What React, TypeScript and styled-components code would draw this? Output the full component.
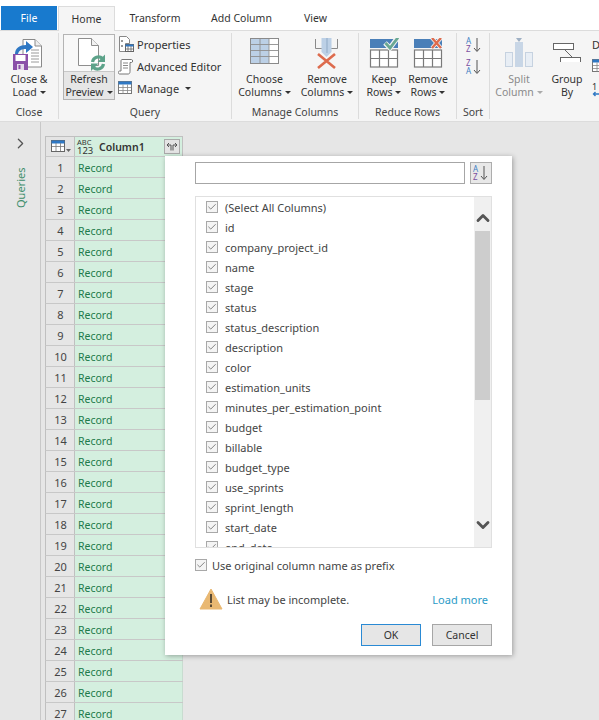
import React from "react";
import styled, { createGlobalStyle } from "styled-components";
import { ChevronRight, ChevronUp, ChevronDown, Check } from "lucide-react";

const FONT = `"Noto Sans", "Open Sans", "Liberation Sans", sans-serif`;

const Global = createGlobalStyle`
  html, body { margin: 0; padding: 0; background: #e6e6e6; }
  body { font-family: ${FONT}; color: #333; }
  * { box-sizing: border-box; }
`;

const Page = styled.div`
  width: 599px;
  height: 720px;
  overflow: hidden;
  position: relative;
  display: flex;
  flex-direction: column;
`;

/* ---- tabs ---- */
const Tabs = styled.div`
  height: 30px;
  padding-top: 6px;
  background: #fff;
  display: flex;
  padding-left: 1px;
  flex: none;
`;
const Tab = styled.div<{ $w: number; $active?: boolean; $file?: boolean }>`
  width: ${(p) => p.$w}px;
  height: ${(p) => (p.$active ? 25 : 24)}px;
  display: flex;
  align-items: center;
  justify-content: center;
  font-size: 10.5px;
  color: ${(p) => (p.$file ? "#fff" : "#333")};
  background: ${(p) => (p.$file ? "#187ace" : p.$active ? "#f5f5f5" : "#fff")};
  border: ${(p) => (p.$active ? "1px solid #dcdcdc" : "none")};
  border-bottom: none;
  position: relative;
  z-index: 1;
`;

/* ---- ribbon ---- */
const Ribbon = styled.div`
  height: 92px;
  flex: none;
  display: flex;
  background: #f5f5f5;
  border-top: 1px solid #dcdcdc;
  border-bottom: 1px solid #dcdcdc;
  overflow: hidden;
  padding-top: 2px;
`;
const Group = styled.div<{ $w: number; $last?: boolean }>`
  width: ${(p) => p.$w}px;
  flex: none;
  height: 86px;
  display: flex;
  flex-direction: column;
  border-right: ${(p) => (p.$last ? "none" : "1px solid #dcdcdc")};
`;
const GroupBody = styled.div<{ $pad?: number }>`
  flex: 1;
  display: flex;
  padding-left: ${(p) => p.$pad ?? 0}px;
  min-height: 0;
`;
const GroupLabel = styled.div`
  height: 14px;
  line-height: 14px;
  text-align: center;
  font-size: 10.5px;
  color: #444;
  white-space: nowrap;
`;
const BigBtn = styled.div<{ $w: number; $dim?: boolean }>`
  width: ${(p) => p.$w}px;
  flex: none;
  display: flex;
  flex-direction: column;
  align-items: center;
  color: ${(p) => (p.$dim ? "#8a8a8a" : "#333")};
  font-size: 10.5px;
  line-height: 13px;
  text-align: center;
  white-space: nowrap;
`;
const BigIcon = styled.div`
  height: 40px;
  padding-top: 5px;
  display: flex;
  justify-content: center;
  flex: none;
`;
const Caret = styled.span<{ $dim?: boolean }>`
  display: inline-block;
  width: 0;
  height: 0;
  margin-left: 3px;
  vertical-align: 2px;
  border-left: 3px solid transparent;
  border-right: 3px solid transparent;
  border-top: 3px solid ${(p) => (p.$dim ? "#aaa" : "#333")};
`;
const RefreshBtn = styled.div`
  width: 52px;
  height: 66px;
  margin: 1px 3px 0 4px;
  flex: none;
  border: 1px solid #b4b4b4;
  display: flex;
  flex-direction: column;
  align-items: center;
  font-size: 10.5px;
  line-height: 13px;
  text-align: center;
  white-space: nowrap;
`;
const RefreshTop = styled.div`
  height: 36px;
  width: 100%;
  background: #f8f8f8;
  display: flex;
  justify-content: center;
  padding-top: 3px;
  flex: none;
`;
const RefreshBottom = styled.div`
  flex: 1;
  width: 100%;
  background: #e6e6e6;
  border-top: 1px solid #c8c8c8;
  padding-top: 1px;
`;
const SmallCol = styled.div<{ $ml?: number; $pt?: number }>`
  display: flex;
  flex-direction: column;
  padding-top: ${(p) => p.$pt ?? 0}px;
  margin-left: ${(p) => p.$ml ?? 0}px;
`;
const SmallBtn = styled.div`
  height: 22px;
  display: flex;
  align-items: center;
  gap: 3px;
  font-size: 11px;
  white-space: nowrap;
`;
const TinyStack = styled.div`
  display: flex;
  flex-direction: column;
  font-size: 9px;
  line-height: 9px;
  padding-top: 3px;
`;

/* ---- body ---- */
const Main = styled.div`
  flex: 1;
  display: flex;
  min-height: 0;
  background: #e6e6e6;
`;
const QueriesPane = styled.div`
  width: 41px;
  flex: none;
  border-right: 1px solid #c8c8c8;
  display: flex;
  flex-direction: column;
  align-items: center;
  padding-top: 13px;
  padding-left: 1px;
`;
const QueriesLabel = styled.div`
  writing-mode: vertical-rl;
  transform: rotate(180deg);
  font-size: 11px;
  color: #3e8e6c;
  margin-top: 13px;
  height: 43px;
  line-height: 14px;
  text-align: left;
`;
const Table = styled.div`
  margin: 14px 0 0 4px;
  width: 138px;
  flex: none;
`;
const HeadRow = styled.div`
  height: 21px;
  display: flex;
  border: 1px solid #c0c0c0;
  border-bottom: 1px solid #c8c8c8;
`;
const HeadIndex = styled.div`
  width: 29px;
  flex: none;
  background: #e4e4e4;
  border-right: 1px solid #c0c0c0;
  display: flex;
  align-items: center;
  padding-left: 5px;
`;
const HeadCol = styled.div`
  flex: 1;
  background: #d4efdf;
  display: flex;
  align-items: center;
  padding-left: 2px;
  position: relative;
`;
const TypeBadge = styled.div`
  font-size: 7.5px;
  line-height: 8px;
  color: #333;
  width: 21px;
  flex: none;
  text-align: left;
  & > b { font-weight: 400; font-size: 9.5px; line-height: 9px; display: block; }
`;
const ColName = styled.div`
  font-size: 10.5px;
  font-weight: 600;
  margin-left: 1px;
  color: #333;
`;
const ExpandBtn = styled.div`
  position: absolute;
  right: 2px;
  top: 2px;
  width: 16px;
  height: 15px;
  background: #e4e4e4;
  border: 1px solid #aaa;
  display: flex;
  align-items: center;
  justify-content: center;
`;
const Row = styled.div`
  height: 21px;
  display: flex;
  border-left: 1px solid #c0c0c0;
  border-bottom: 1px solid #c8c8c8;
`;
const RowNum = styled.div`
  width: 29px;
  flex: none;
  background: #e6e6e6;
  border-right: 1px solid #c0c0c0;
  text-align: center;
  font-size: 11px;
  line-height: 21px;
  color: #444;
  padding-left: 1px;
`;
const RowCell = styled.div`
  flex: 1;
  background: #d4efdf;
  border-right: 1px solid #c8dcd0;
  font-size: 10.5px;
  line-height: 22px;
  padding-left: 3px;
  color: #217a4b;
`;

/* ---- dialog ---- */
const Dialog = styled.div`
  position: absolute;
  left: 165px;
  top: 156px;
  width: 347px;
  height: 499px;
  background: #fff;
  box-shadow: 1px 1px 5px rgba(0, 0, 0, 0.32);
  padding: 6px 20px 0 30px;
  display: flex;
  flex-direction: column;
`;
const SearchRow = styled.div`
  display: flex;
  gap: 5px;
  height: 22px;
  flex: none;
`;
const SearchInput = styled.div`
  flex: 1;
  background: #fff;
  border: 1px solid #a6a6a6;
`;
const SortBtn = styled.div`
  width: 22px;
  background: #e8e8e8;
  border: 1px solid #adadad;
  display: flex;
  align-items: center;
  justify-content: center;
`;
const ListBox = styled.div`
  margin-top: 12px;
  height: 352px;
  flex: none;
  border: 1px solid #e0e0e0;
  display: flex;
  overflow: hidden;
`;
const ListItems = styled.div`
  flex: 1;
  padding: 0 0 0 10px;
  overflow: hidden;
`;
const ListItem = styled.div`
  height: 20px;
  display: flex;
  align-items: center;
  gap: 7px;
  font-size: 11px;
  color: #444;
  white-space: nowrap;
`;
const Box = styled.span`
  width: 12px;
  height: 12px;
  flex: none;
  background: #f4f4f4;
  border: 1px solid #a8a8a8;
  display: inline-flex;
  align-items: center;
  justify-content: center;
  color: #6e6e6e;
`;
const ScrollTrack = styled.div`
  width: 17px;
  flex: none;
  background: #f0f0f0;
  display: flex;
  flex-direction: column;
  align-items: center;
  color: #555;
`;
const ScrollArrow = styled.div<{ $h: number; $top: number }>`
  height: ${(p) => p.$h}px;
  padding-top: ${(p) => p.$top}px;
  flex: none;
`;
const ScrollThumb = styled.div`
  width: 15px;
  height: 169px;
  background: #cdcdcd;
  flex: none;
`;
const ScrollGap = styled.div`
  flex: 1;
`;
const PrefixRow = styled.div`
  margin-top: 10px;
  display: flex;
  align-items: center;
  gap: 5px;
  height: 14px;
  font-size: 11px;
  color: #444;
`;
const WarnRow = styled.div`
  margin-top: 15px;
  height: 24px;
  display: flex;
  align-items: center;
  padding: 0 4px 0 4px;
  font-size: 11px;
  color: #444;
`;
const WarnText = styled.div`
  margin-left: 4px;
  flex: 1;
`;
const LoadMore = styled.div`
  color: #2b9bc7;
  font-size: 11px;
`;
const Actions = styled.div`
  margin-top: 13px;
  display: flex;
  justify-content: flex-end;
  gap: 11px;
`;
const DlgButton = styled.div<{ $primary?: boolean }>`
  width: 60px;
  height: 22px;
  background: #e6e6e6;
  border: 1px solid ${(p) => (p.$primary ? "#2a8ad4" : "#a6a6a6")};
  font-size: 10.5px;
  line-height: 20px;
  text-align: center;
  color: #333;
`;

/* ---- icons ---- */
const CloseLoadIcon = () => (
  <svg width="32" height="33" viewBox="0 0 32 33">
    <path d="M10 1.500h12l6.500 6.500v21H10z" fill="#fff" stroke="#8a8a8a" />
    <path d="M22 1.500V8h6.500" fill="#eee" stroke="#8a8a8a" />
    <path d="M18 12h8M18 15h8M18 18h8M18 21h8M18 24h8" stroke="#9a9a9a" />
    <path d="M2 16c0-6 5-9 11-9V3l7 6-7 6v-4c-4 0-7 1-8 5z" fill="#2f78c4" />
    <rect x="0" y="16" width="15" height="16" fill="#8a4fa8" />
    <rect x="2.500" y="17" width="10" height="6" fill="#fff" />
    <rect x="4" y="26" width="7" height="6" fill="#e4d8ea" />
    <rect x="5.500" y="27" width="2" height="4" fill="#8a4fa8" />
  </svg>
);
const RefreshIcon = () => (
  <svg width="34" height="33" viewBox="0 0 34 33">
    <path d="M6.500.5h13l7 7v20h-20z" fill="#fff" stroke="#8e8e8e" />
    <path d="M19.500.5v7h7" fill="#f2f2f2" stroke="#8e8e8e" />
    <path d="M20.500 24a6 6 0 0 1 10-3.500" fill="none" stroke="#5da38a" strokeWidth="3.200" />
    <path d="M33 16.500v7.500h-7.500z" fill="#5da38a" />
    <path d="M31.500 26a6 6 0 0 1-10 3.500" fill="none" stroke="#5da38a" strokeWidth="3.200" />
    <path d="M19 33v-7.500h7.500z" fill="#5da38a" />
  </svg>
);
const PropsIcon = () => (
  <svg width="16" height="16" viewBox="0 0 16 16">
    <path d="M1.500.5h7l3 3v4h-4v8h-6z" fill="#fff" stroke="#888" />
    <circle cx="4" cy="5" r="1" fill="#777" />
    <circle cx="4" cy="10" r="1" fill="#777" />
    <rect x="7.500" y="8.500" width="8" height="7" fill="#fff" stroke="#666" />
    <rect x="7.500" y="8.500" width="8" height="2" fill="#2f78c4" />
    <path d="M10 10v5M13 10v5M8 13h7" stroke="#666" strokeWidth=".8" />
  </svg>
);
const EditorIcon = () => (
  <svg width="16" height="17" viewBox="0 0 16 17">
    <path d="M4 1.500h9.500c1.500 0 1.500 3 0 3H12v9c0 2-1 2.500-2 2.500H1.500c-1.500 0-1.500-3 0-3H3V3c0-1 .5-1.500 1-1.500z" fill="#fff" stroke="#777" />
    <path d="M5 5h5M5 7.500h5M5 10h5" stroke="#888" />
  </svg>
);
const GridSmall = () => (
  <svg width="16" height="14" viewBox="0 0 16 14">
    <rect x=".5" y=".5" width="13" height="12" fill="#fff" stroke="#777" />
    <rect x=".5" y=".5" width="13" height="3" fill="#2f78c4" />
    <path d="M5 3.500v9M9.500 3.500v9M1 6.500h12M1 9.500h12" stroke="#888" strokeWidth=".8" />
  </svg>
);
const ChooseIcon = () => (
  <svg width="30" height="28" viewBox="0 0 30 28">
    <rect x=".5" y=".5" width="28" height="25" fill="#fff" stroke="#8a8a8a" />
    <rect x="1" y="1" width="18" height="24" fill="#bcd0e6" />
    <path d="M10 1v24M19 1v24M1 6.500h27M1 12.500h27M1 18.500h27" stroke="#8f8f8f" strokeWidth=".9" />
  </svg>
);
const RemoveColsIcon = () => (
  <svg width="30" height="32" viewBox="0 0 30 32">
    <path d="M3.500 1v9.500h22V1" fill="none" stroke="#8a8a8a" />
    <path d="M9.500 0h10v14l-5 5-5-5z" fill="#bcd0e6" />
    <path d="M14 0h2v15h-2z" fill="#a6bdd6" />
    <path d="M6 16l17 14M23 16L6 30" stroke="#dd6b4d" strokeWidth="2.600" />
  </svg>
);
const RowsIcon = ({ mark }: { mark: "keep" | "remove" }) => (
  <svg width="30" height="30" viewBox="0 0 30 30">
    <rect x="1" y="1" width="28" height="9" fill="#4a7fb8" />
    <rect x="1.500" y="12" width="27" height="17" fill="#fff" stroke="#7a7a7a" strokeWidth="1.200" />
    <path d="M10.500 12v17M19.500 12v17M1 20.500h27" stroke="#7a7a7a" strokeWidth="1.200" />
    {mark === "keep" ? (
      <>
        <path d="M16 5l5 5L29-1" fill="none" stroke="#f5f5f5" strokeWidth="5" />
        <path d="M16.500 5l4.500 5L29-.5" fill="none" stroke="#6aa893" strokeWidth="2.800" />
      </>
    ) : (
      <>
        <path d="M19 0l9 10M28 0l-9 10" stroke="#f5f5f5" strokeWidth="4" />
        <path d="M19 0l9 10M28 0l-9 10" stroke="#dd6b4d" strokeWidth="2.400" />
      </>
    )}
  </svg>
);
const SortIcon = ({ desc }: { desc?: boolean }) => (
  <svg width="16" height="16" viewBox="0 0 16 16" overflow="visible">
    <text x="0" y="7" fontSize="8" fontFamily="Noto Sans" fill={desc ? "#7a4fa0" : "#3d7fc4"}>
      {desc ? "Z" : "A"}
    </text>
    <text x="0" y="15" fontSize="8" fontFamily="Noto Sans" fill={desc ? "#3d7fc4" : "#7a4fa0"}>
      {desc ? "A" : "Z"}
    </text>
    <path d="M11 1v13M8 11l3 3.500 3-3.500" fill="none" stroke="#555" />
  </svg>
);
const SplitIcon = () => (
  <svg width="30" height="30" viewBox="0 0 30 30">
    <rect x="1.500" y="14.500" width="7" height="14" fill="#e8eef5" stroke="#c6d2e0" />
    <rect x="11" y="4" width="8" height="25" fill="#c8d6e6" />
    <path d="M12 0h6l-3 4z" fill="#9fb0c4" />
    <rect x="21.500" y="14.500" width="7" height="14" fill="#e8eef5" stroke="#c6d2e0" />
  </svg>
);
const GroupByIcon = () => (
  <svg width="30" height="24" viewBox="0 0 30 24">
    <rect x="1.500" y="5.500" width="20" height="6" fill="#fff" stroke="#666" />
    <rect x="8.500" y="19.500" width="20" height="6" fill="#fff" stroke="#666" />
    <path d="M13 12l7 7" stroke="#666" />
  </svg>
);
const ReturnArrow = () => (
  <svg width="10" height="6" viewBox="0 0 10 6">
    <path d="M8 0v3H1.500M3.500 1L1.500 3l2 2" fill="none" stroke="#2f78c4" strokeWidth="1.400" />
  </svg>
);
const TableMenuIcon = () => (
  <svg width="21" height="13" viewBox="0 0 21 13">
    <rect x=".5" y=".5" width="13" height="11" fill="#fff" stroke="#666" />
    <rect x=".5" y=".5" width="13" height="3" fill="#2f78c4" />
    <path d="M5 3v8M9.500 3v8M1 6.500h12" stroke="#777" strokeWidth=".8" />
    <path d="M15 9h5l-2.500 3z" fill="#666" />
  </svg>
);
const ExpandIcon = () => (
  <svg width="12" height="9" viewBox="0 0 12 9">
    <path d="M5 8.500V3H1M3 1L1 3l2 2" fill="none" stroke="#555" />
    <path d="M7 8.500V3h4M9 1l2 2-2 2" fill="none" stroke="#555" />
  </svg>
);
const WarnIcon = () => (
  <svg width="24" height="22" viewBox="0 0 24 22">
    <path d="M12 1l11 20H1z" fill="#e9b872" stroke="#e9b872" strokeLinejoin="round" />
    <rect x="11" y="6" width="2" height="9" fill="#5a4a35" />
    <rect x="11" y="16.500" width="2" height="2.500" fill="#5a4a35" />
  </svg>
);

const columns = [
  "(Select All Columns)",
  "id",
  "company_project_id",
  "name",
  "stage",
  "status",
  "status_description",
  "description",
  "color",
  "estimation_units",
  "minutes_per_estimation_point",
  "budget",
  "billable",
  "budget_type",
  "use_sprints",
  "sprint_length",
  "start_date",
  "end_date",
];

const Checkbox = () => (
  <Box>
    <Check size={10} strokeWidth={2} />
  </Box>
);

export default function App() {
  return (
    <Page>
      <Global />
      <Tabs>
        <Tab $w={56} $file>File</Tab>
        <Tab $w={1} />
        <Tab $w={57} $active>Home</Tab>
        <Tab $w={80}>Transform</Tab>
        <Tab $w={93}>Add Column</Tab>
        <Tab $w={55}>View</Tab>
      </Tabs>
      <Ribbon>
        <Group $w={59}>
          <GroupBody>
            <BigBtn $w={58}>
              <BigIcon><CloseLoadIcon /></BigIcon>
              <span>Close &amp;</span>
              <span>Load<Caret /></span>
            </BigBtn>
          </GroupBody>
          <GroupLabel>Close</GroupLabel>
        </Group>
        <Group $w={173}>
          <GroupBody>
            <RefreshBtn>
              <RefreshTop><RefreshIcon /></RefreshTop>
              <RefreshBottom>
                Refresh<br />Preview<Caret />
              </RefreshBottom>
            </RefreshBtn>
            <SmallCol>
              <SmallBtn><PropsIcon />Properties</SmallBtn>
              <SmallBtn><EditorIcon />Advanced Editor</SmallBtn>
              <SmallBtn><GridSmall />Manage<Caret /></SmallBtn>
            </SmallCol>
          </GroupBody>
          <GroupLabel>Query</GroupLabel>
        </Group>
        <Group $w={127}>
          <GroupBody>
            <BigBtn $w={65}>
              <BigIcon><ChooseIcon /></BigIcon>
              <span>Choose</span>
              <span>Columns<Caret /></span>
            </BigBtn>
            <BigBtn $w={60}>
              <BigIcon><RemoveColsIcon /></BigIcon>
              <span>Remove</span>
              <span>Columns<Caret /></span>
            </BigBtn>
          </GroupBody>
          <GroupLabel>Manage Columns</GroupLabel>
        </Group>
        <Group $w={98}>
          <GroupBody $pad={3}>
            <BigBtn $w={44}>
              <BigIcon><RowsIcon mark="keep" /></BigIcon>
              <span>Keep</span>
              <span>Rows<Caret /></span>
            </BigBtn>
            <BigBtn $w={44}>
              <BigIcon><RowsIcon mark="remove" /></BigIcon>
              <span>Remove</span>
              <span>Rows<Caret /></span>
            </BigBtn>
          </GroupBody>
          <GroupLabel>Reduce Rows</GroupLabel>
        </Group>
        <Group $w={33}>
          <GroupBody $pad={9}>
            <SmallCol $pt={1}>
              <SmallBtn><SortIcon /></SmallBtn>
              <SmallBtn><SortIcon desc /></SmallBtn>
            </SmallCol>
          </GroupBody>
          <GroupLabel>Sort</GroupLabel>
        </Group>
        <Group $w={109} $last>
          <GroupBody $pad={4}>
            <BigBtn $w={50} $dim>
              <BigIcon><SplitIcon /></BigIcon>
              <span>Split</span>
              <span>Column<Caret $dim /></span>
            </BigBtn>
            <BigBtn $w={46}>
              <BigIcon><GroupByIcon /></BigIcon>
              <span>Group</span>
              <span>By</span>
            </BigBtn>
            <SmallCol $ml={2}>
              <SmallBtn>D</SmallBtn>
              <SmallBtn><GridSmall /></SmallBtn>
              <SmallBtn>
                <TinyStack>1<ReturnArrow /></TinyStack>
              </SmallBtn>
            </SmallCol>
          </GroupBody>
        </Group>
      </Ribbon>
      <Main>
        <QueriesPane>
          <ChevronRight size={17} strokeWidth={1.8} color="#555" />
          <QueriesLabel>Queries</QueriesLabel>
        </QueriesPane>
        <Table>
          <HeadRow>
            <HeadIndex><TableMenuIcon /></HeadIndex>
            <HeadCol>
              <TypeBadge>ABC<b>123</b></TypeBadge>
              <ColName>Column1</ColName>
              <ExpandBtn><ExpandIcon /></ExpandBtn>
            </HeadCol>
          </HeadRow>
          {Array.from({ length: 27 }, (_, i) => (
            <Row key={i}>
              <RowNum>{i + 1}</RowNum>
              <RowCell>Record</RowCell>
            </Row>
          ))}
        </Table>
      </Main>
      <Dialog>
        <SearchRow>
          <SearchInput />
          <SortBtn><SortIcon /></SortBtn>
        </SearchRow>
        <ListBox>
          <ListItems>
            {columns.map((c) => (
              <ListItem key={c}>
                <Checkbox />
                {c}
              </ListItem>
            ))}
          </ListItems>
          <ScrollTrack>
            <ScrollArrow $h={34} $top={11}><ChevronUp size={20} strokeWidth={3.4} /></ScrollArrow>
            <ScrollThumb />
            <ScrollGap />
            <ScrollArrow $h={32} $top={0}><ChevronDown size={20} strokeWidth={3.4} /></ScrollArrow>
          </ScrollTrack>
        </ListBox>
        <PrefixRow>
          <Checkbox />
          Use original column name as prefix
        </PrefixRow>
        <WarnRow>
          <WarnIcon />
          <WarnText>List may be incomplete.</WarnText>
          <LoadMore>Load more</LoadMore>
        </WarnRow>
        <Actions>
          <DlgButton $primary>OK</DlgButton>
          <DlgButton>Cancel</DlgButton>
        </Actions>
      </Dialog>
    </Page>
  );
}
